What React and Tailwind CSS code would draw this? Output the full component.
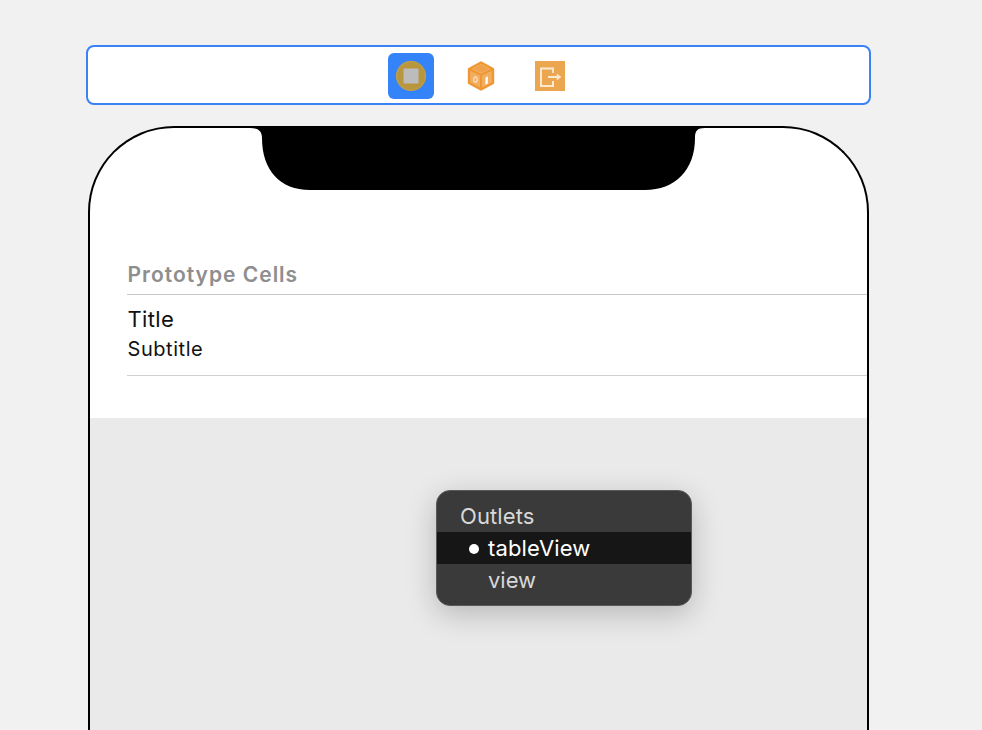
export default function App() {
  const font = { fontFamily: 'Inter, "Liberation Sans", sans-serif' };
  return (
    <div className="h-[730px] w-[982px] overflow-hidden bg-[#f1f1f1] pt-[45px]" style={font}>
      <div className="ml-[86px] flex h-[60px] w-[785px] items-center justify-center rounded-[8px] border-2 border-[#3b82f6] bg-white">
        <div className="ml-[-4px] mt-[2px] flex items-center">
          <div className="flex h-[46px] w-[46px] items-center justify-center rounded-[6px] bg-[#3483f8]">
            <svg width="32" height="32" viewBox="0 0 32 32">
              <circle cx="16" cy="16" r="15" fill="#b8963e" />
              <circle cx="16" cy="16" r="14.500" fill="none" stroke="#c4a24c" strokeWidth="1" />
              <rect x="8.500" y="8.500" width="15" height="15" fill="#bcbcbc" />
            </svg>
          </div>
          <svg className="ml-[32px]" width="30" height="30" viewBox="0 0 30 30">
            <path d="M15 1.500 27 8v14l-12 6.500L3 22V8z" fill="#f2ad5f" stroke="#ee9733" strokeWidth="2.400" strokeLinejoin="round" />
            <path d="M4 8.500 15 14 26 8.500M15 14V27" fill="none" stroke="#ee9733" strokeWidth="2" />
            <path d="M15 4 22.500 8 15 11.500 7.500 8z" fill="#f0a24a" />
            <path d="M19.500 16.500 21.800 15.300V22.500L19.500 23.700z" fill="#fff" />
            <ellipse cx="9.500" cy="18.500" rx="1.700" ry="2.600" fill="none" stroke="#fbe3c6" strokeWidth="1.200" />
          </svg>
          <div className="ml-[39px] h-[30px] w-[30px] bg-[#eca650]">
            <svg width="30" height="30" viewBox="0 0 30 30" fill="none" stroke="#fbe9d0" strokeWidth="2">
              <path d="M18 12V7.500H6V25H18V20" />
              <path d="M13 16H23" />
              <path d="M22 13 26 16 22 19z" fill="#fbe9d0" strokeWidth="0.500" />
            </svg>
          </div>
        </div>
      </div>

      <div className="relative ml-[88px] mt-[21px] h-[640px] w-[781px] overflow-hidden rounded-t-[86px] border-2 border-b-0 border-black bg-white">
        <div className="h-[290px] pl-[37px] pt-[132px]">
          <div className="flex h-[35px] items-center border-b border-[#c8c8c8] pb-[6px] pl-[0.5px] text-[21px] font-semibold leading-none tracking-[1px] text-[#8e8e8e]">
            Prototype Cells
          </div>
          <div className="h-[81px] border-b border-[#d0d0d0] pl-[0.5px] pt-[11px] text-[#111111]">
            <div className="text-[22px] leading-[26px] tracking-[0.35px]">Title</div>
            <div className="mt-[4px] text-[20px] leading-[26px] tracking-[0.55px]">Subtitle</div>
          </div>
        </div>
        <div className="flex h-[400px] items-start bg-[#eaeaea] pl-[346px] pt-[72px]">
          <div className="h-[116px] w-[256px] overflow-hidden rounded-[14px] border border-[#595959] bg-[#3a3a3a] pt-[9px] text-[22px] leading-[32px] text-[#d8d8d8] shadow-[0_8px_30px_rgba(0,0,0,0.22)]">
            <div className="pl-[23px] tracking-[0.1px]">Outlets</div>
            <div className="flex h-[32px] items-center bg-[#161616] text-white">
              <span className="ml-[32px] mt-[1px] h-[10px] w-[10px] rounded-full bg-white" />
              <span className="ml-[9px] tracking-[0.15px]">tableView</span>
            </div>
            <div className="pl-[51px]">view</div>
          </div>
        </div>
        <svg className="absolute left-[160px] top-[-2px]" width="455" height="66" viewBox="0 0 455 66">
          <path d="M0 0H455V2C447 2 445 5 445 12C445 44 425 64 395 64H60C30 64 12 44 12 12C12 5 8 2 0 2Z" fill="#000" />
        </svg>
      </div>
    </div>
  );
}
